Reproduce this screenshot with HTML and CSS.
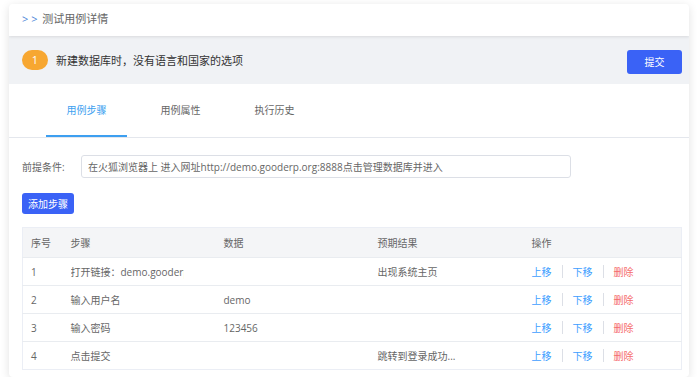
FILE: index.html
```html
<!DOCTYPE html>
<html lang="zh-CN">
<head>
    <meta charset="UTF-8">
    <meta name="viewport" content="width=device-width, initial-scale=1.0">
    <title>测试用例详情</title>
    <link rel="stylesheet" href="styles.css">
</head>
<body>

<div class="card">
    <div class="page-head">
        <span class="arrows">&gt; &gt;</span> 测试用例详情
    </div>

    <div class="case-bar">
        <span class="badge">1</span>
        <span class="case-title">新建数据库时，没有语言和国家的选项</span>
        <button class="btn btn-submit">提交</button>
    </div>

    <div class="tabs">
        <div class="tab active">用例步骤</div>
        <div class="tab">用例属性</div>
        <div class="tab">执行历史</div>
    </div>

    <div class="content">
        <div class="cond-row">
            <label for="cond">前提条件:</label>
            <input type="text" id="cond" value="在火狐浏览器上 进入网址http://demo.gooderp.org:8888点击管理数据库并进入">
        </div>

        <button class="btn btn-add">添加步骤</button>

        <table class="steps">
            <colgroup>
                <col class="c-no">
                <col class="c-step">
                <col class="c-data">
                <col class="c-expect">
                <col class="c-op">
            </colgroup>
            <thead>
                <tr>
                    <th>序号</th>
                    <th>步骤</th>
                    <th>数据</th>
                    <th>预期结果</th>
                    <th>操作</th>
                </tr>
            </thead>
            <tbody>
                <tr>
                    <td>1</td>
                    <td><span class="clip">打开链接：demo.gooderp.org</span></td>
                    <td></td>
                    <td>出现系统主页</td>
                    <td><span class="ops"><a class="op">上移</a><i class="sep"></i><a class="op">下移</a><i class="sep"></i><a class="op del">删除</a></span></td>
                </tr>
                <tr>
                    <td>2</td>
                    <td>输入用户名</td>
                    <td>demo</td>
                    <td></td>
                    <td><span class="ops"><a class="op">上移</a><i class="sep"></i><a class="op">下移</a><i class="sep"></i><a class="op del">删除</a></span></td>
                </tr>
                <tr>
                    <td>3</td>
                    <td>输入密码</td>
                    <td>123456</td>
                    <td></td>
                    <td><span class="ops"><a class="op">上移</a><i class="sep"></i><a class="op">下移</a><i class="sep"></i><a class="op del">删除</a></span></td>
                </tr>
                <tr>
                    <td>4</td>
                    <td>点击提交</td>
                    <td></td>
                    <td>跳转到登录成功...</td>
                    <td><span class="ops"><a class="op">上移</a><i class="sep"></i><a class="op">下移</a><i class="sep"></i><a class="op del">删除</a></span></td>
                </tr>
            </tbody>
        </table>
    </div>
</div>

</body>
</html>
```

FILE: styles.css
```css
body {
    margin: 0;
    padding: 4px 0 0 9px;
    background: #fff;
    font-family: "Open Sans", "Noto Sans CJK SC", sans-serif;
    color: #666;
}

.card {
    width: 680px;
    background: #fff;
    border-radius: 4px;
    box-shadow: 0 2px 10px rgba(0,0,0,0.12);
    overflow: hidden;
}

.page-head {
    height: 32px;
    line-height: 30px;
    padding-left: 13px;
    font-size: 11px;
    color: #666;
    box-shadow: 0 1px 3px rgba(0,0,0,0.1);
    position: relative;
}

.arrows {
    color: #4a86d8;
    margin-right: 2px;
}

.case-bar {
    height: 48px;
    background: #f0f2f5;
    display: flex;
    align-items: center;
    padding: 0 7px 0 13px;
}

.badge {
    width: 26px;
    height: 20px;
    line-height: 20px;
    border-radius: 10px;
    background: #f7a731;
    color: #fff;
    font-size: 11px;
    text-align: center;
    margin-top: -1px;
}

.case-title {
    margin-left: 8px;
    font-size: 11px;
    color: #333;
    flex: 1;
    margin-top: -1px;
}

.btn {
    background-color: #3a62f6;
    color: #fff;
    border: none;
    border-radius: 3px;
    font-family: inherit;
    font-size: 10px;
    padding: 0;
    cursor: pointer;
}

.btn-submit {
    width: 55px;
    height: 24px;
    margin-top: 3px;
}

.tabs {
    display: flex;
    height: 53px;
    padding-left: 37px;
    border-bottom: 1px solid #e4e7ed;
}

.tab {
    width: 81px;
    margin-right: 13px;
    text-align: center;
    line-height: 53px;
    font-size: 10px;
    color: #666;
    box-sizing: border-box;
}

.tab.active {
    color: #3d9ff0;
    border-bottom: 2px solid #3d9ff0;
    line-height: 53px;
    height: 53px;
}

.content {
    padding: 17px 7px 7px 13px;
}

.cond-row {
    display: flex;
    align-items: center;
}

.cond-row label {
    font-size: 10px;
    color: #666;
    width: 59px;
}

.cond-row input {
    width: 490px;
    height: 23px;
    box-sizing: border-box;
    border: 1px solid #dcdfe6;
    border-radius: 3px;
    padding: 0 6px;
    font-family: inherit;
    font-size: 10px;
    color: #666;
}

.btn-add {
    display: block;
    width: 52px;
    height: 21px;
    margin-top: 15px;
}

.steps {
    margin-top: 13px;
    width: 660px;
    border-collapse: collapse;
    table-layout: fixed;
    border: 1px solid #ebeef5;
    font-size: 10px;
}

.c-no { width: 40px; }
.c-step { width: 153px; }
.c-data { width: 154px; }
.c-expect { width: 154px; }

.steps th {
    background: #f4f5f7;
    height: 29px;
    text-align: left;
    font-weight: normal;
    color: #666;
    padding: 0 8px;
}

.steps td {
    height: 27px;
    padding: 0 8px;
    border-top: 1px solid #e9ecf0;
    color: #666;
    white-space: nowrap;
    overflow: hidden;
}

.clip {
    display: inline-block;
    width: 113px;
    overflow: hidden;
    vertical-align: middle;
}

.ops {
    display: inline-flex;
    align-items: center;
    vertical-align: middle;
}

.op {
    color: #409eff;
    cursor: pointer;
}

.op.del {
    color: #f56c6c;
}

.sep {
    display: inline-block;
    width: 1px;
    height: 13px;
    background: #dcdfe6;
    margin: 0 10px;
}
```
